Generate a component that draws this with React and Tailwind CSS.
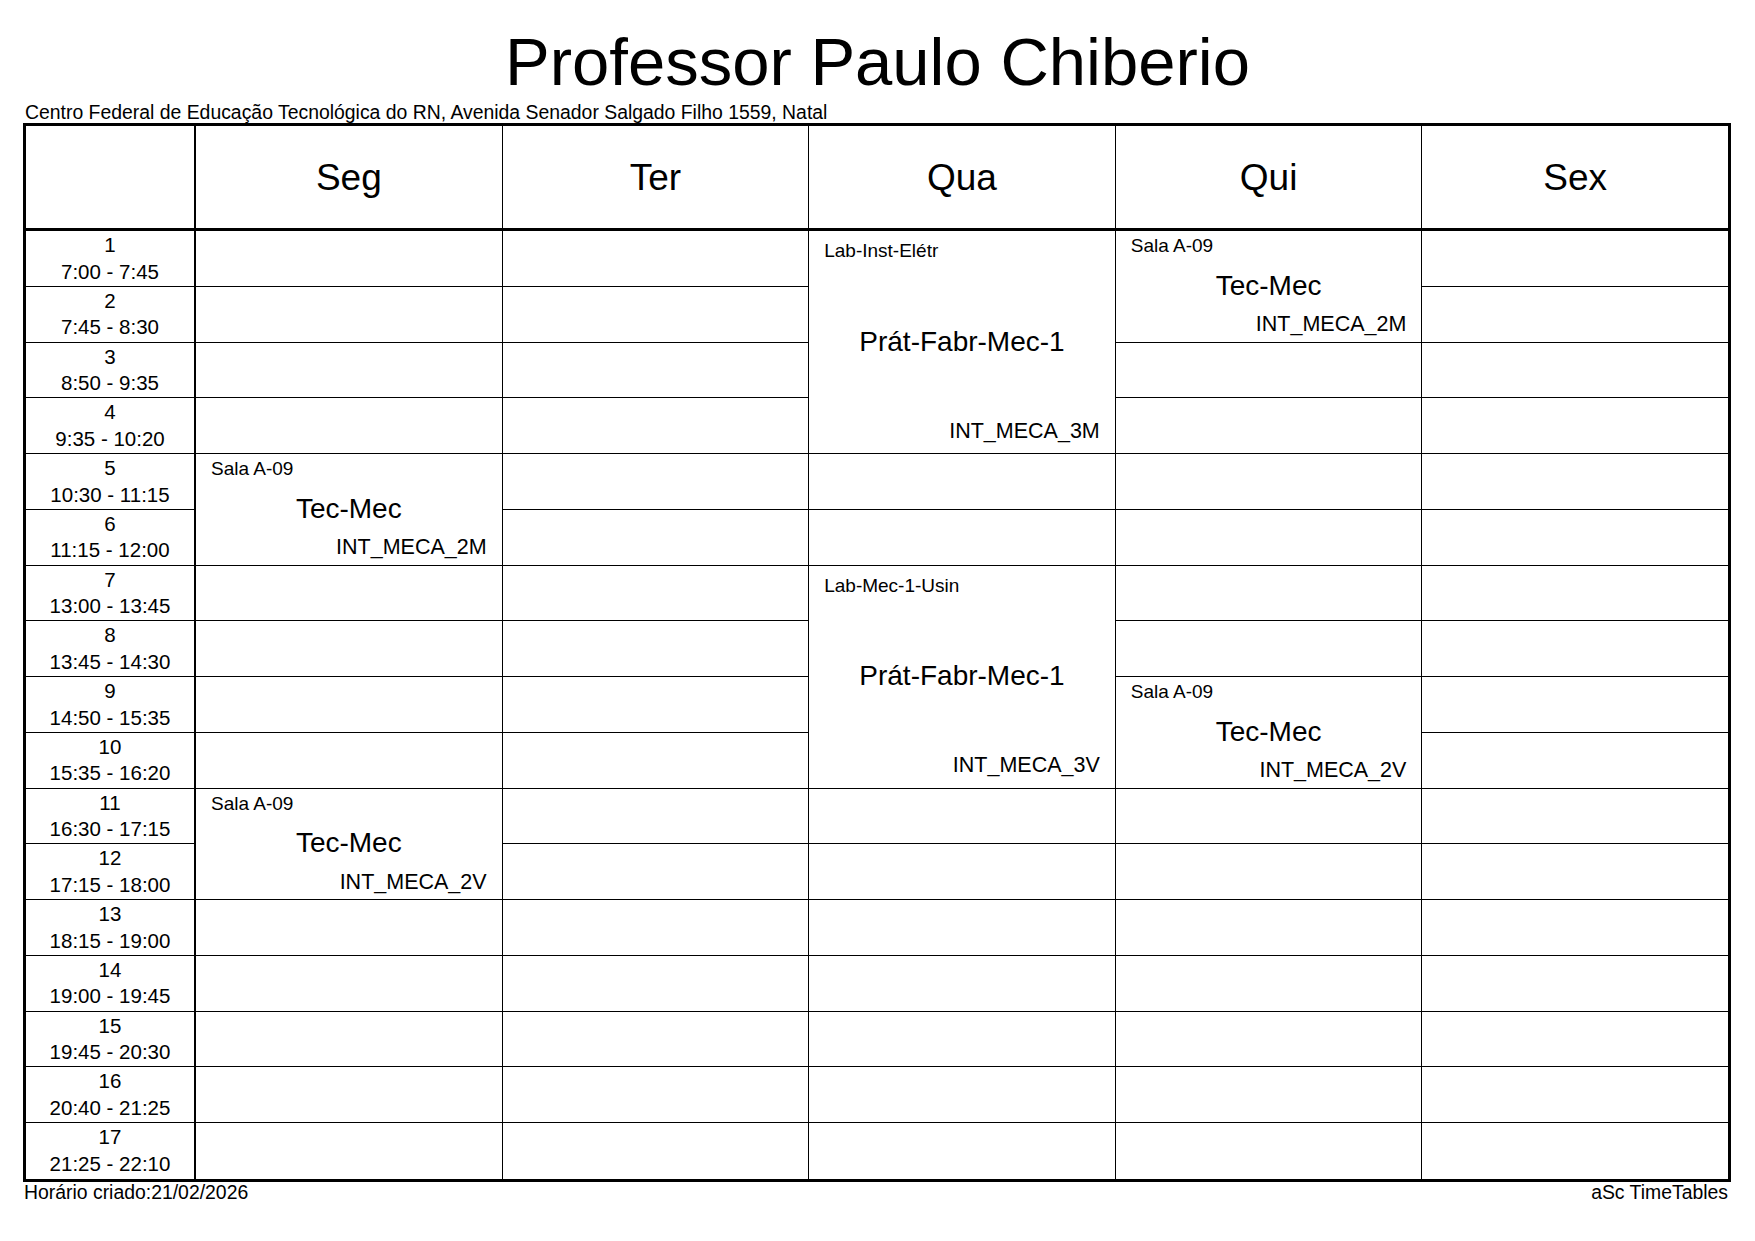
const TIMES = [
  '7:00 - 7:45',
  '7:45 - 8:30',
  '8:50 - 9:35',
  '9:35 - 10:20',
  '10:30 - 11:15',
  '11:15 - 12:00',
  '13:00 - 13:45',
  '13:45 - 14:30',
  '14:50 - 15:35',
  '15:35 - 16:20',
  '16:30 - 17:15',
  '17:15 - 18:00',
  '18:15 - 19:00',
  '19:00 - 19:45',
  '19:45 - 20:30',
  '20:40 - 21:25',
  '21:25 - 22:10',
];

const empty = (n) => Array.from({ length: n }, () => ({ span: 1 }));

const tecMec = (group) => ({ span: 2, room: 'Sala A-09', subject: 'Tec-Mec', group });
const pratFabr = (room, group) => ({ span: 4, room, subject: 'Prát-Fabr-Mec-1', group });

const DAYS = [
  { name: 'Seg', blocks: [...empty(4), tecMec('INT_MECA_2M'), ...empty(4), tecMec('INT_MECA_2V'), ...empty(5)] },
  { name: 'Ter', blocks: empty(17) },
  {
    name: 'Qua',
    blocks: [pratFabr('Lab-Inst-Elétr', 'INT_MECA_3M'), ...empty(2), pratFabr('Lab-Mec-1-Usin', 'INT_MECA_3V'), ...empty(7)],
  },
  { name: 'Qui', blocks: [tecMec('INT_MECA_2M'), ...empty(6), tecMec('INT_MECA_2V'), ...empty(7)] },
  { name: 'Sex', blocks: empty(17) },
];

// row pitch of the grid, line included
const ROW_H = { 1: 'h-[55.75px]', 2: 'h-[111.5px]', 4: 'h-[223px]' };
const PAD = { 2: 'pt-[5px] pb-[6px]', 4: 'pt-[10px] pb-[11px]' };

function HeaderCell({ children }) {
  return (
    <div className="h-[105px] border-b-[3px] border-black flex items-center justify-center text-[37px] leading-none">
      {children}
    </div>
  );
}

function Lesson({ block }) {
  return (
    <div className={`${ROW_H[block.span]} ${PAD[block.span]} grid grid-rows-[1fr_auto_1fr] px-[15px] border-b border-black last:border-b-0`}>
      <div className="self-start text-[19px] leading-none">{block.room}</div>
      <div className="text-center text-[28px] leading-none">{block.subject}</div>
      <div className="self-end text-right text-[21.5px] leading-none">{block.group}</div>
    </div>
  );
}

function DayColumn({ day, first }) {
  return (
    <div className={`flex-1 min-w-0 flex flex-col ${first ? '' : 'border-l border-black'}`}>
      <HeaderCell>{day.name}</HeaderCell>
      {day.blocks.map((b, i) =>
        b.subject ? (
          <Lesson key={i} block={b} />
        ) : (
          <div key={i} className="h-[55.75px] border-b border-black last:border-b-0" />
        )
      )}
    </div>
  );
}

export default function App() {
  return (
    <div className="w-[1755px] min-h-[1241px] bg-white text-black font-['Liberation_Sans',Arial,sans-serif] pt-[28px]">
      <h1 className="text-[67px] leading-[68px] text-center">Professor Paulo Chiberio</h1>
      <div className="mt-[6px] pl-[25px] text-[19.4px] leading-[21px]">
        Centro Federal de Educação Tecnológica do RN, Avenida Senador Salgado Filho 1559, Natal
      </div>

      <div className="ml-[23px] w-[1708px] border-[3px] border-black flex">
        <div className="w-[170px] shrink-0 border-r-2 border-black flex flex-col">
          <HeaderCell />
          {TIMES.map((t, i) => (
            <div
              key={i}
              className="h-[55.75px] border-b border-black last:border-b-0 flex flex-col items-center pt-[1px] text-[20.5px] leading-[26.5px]"
            >
              <span>{i + 1}</span>
              <span>{t}</span>
            </div>
          ))}
        </div>
        {DAYS.map((d, i) => (
          <DayColumn key={d.name} day={d} first={i === 0} />
        ))}
      </div>

      <div className="ml-[23px] w-[1708px] flex justify-between pl-[1px] pr-[3px] text-[19.4px] leading-[21px]">
        <span>Horário criado:21/02/2026</span>
        <span>aSc TimeTables</span>
      </div>
    </div>
  );
}
